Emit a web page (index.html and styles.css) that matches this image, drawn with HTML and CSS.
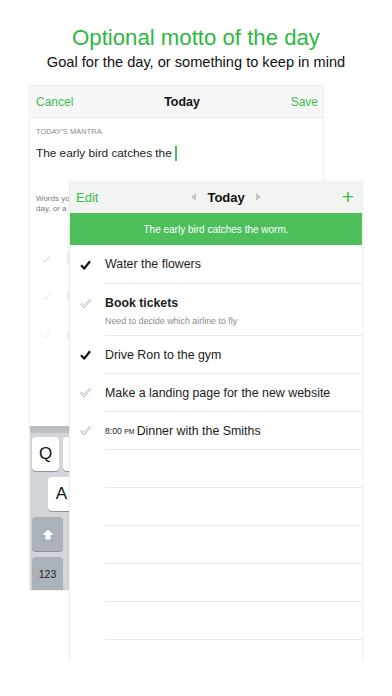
FILE: index.html
```html
<!DOCTYPE html>
<html lang="en">
<head>
    <meta charset="UTF-8">
    <title>Optional motto of the day</title>
    <link rel="stylesheet" href="styles.css">
</head>
<body>
    <div class="intro">
        <h1 class="title">Optional motto of the day</h1>
        <p class="subtitle">Goal for the day, or something to keep in mind</p>
    </div>

    <div class="stage">
        <!-- editor sheet behind -->
        <div class="back">
            <div class="back-bar">
                <span class="link">Cancel</span>
                <span class="bar-title">Today</span>
                <span class="link">Save</span>
            </div>
            <div class="back-body">
                <div class="label">TODAY'S MANTRA</div>
                <div class="input">The early bird catches the<i class="cursor"></i></div>
                <!-- only the strip left of the list sheet shows -->
                <div class="hint">Words yo<br>day, or a</div>
                <ul class="ghost">
                    <li><svg width="9" height="8" viewBox="0 0 11 10"><path d="M1 5.5 L4 8.5 L10 1.5" fill="none" stroke="#e6e6e6" stroke-width="1.8"/></svg><span>D</span></li>
                    <li><svg width="9" height="8" viewBox="0 0 11 10"><path d="M1 5.5 L4 8.5 L10 1.5" fill="none" stroke="#ececec" stroke-width="1.4"/></svg><span>M</span></li>
                    <li><svg width="9" height="8" viewBox="0 0 11 10"><path d="M1 5.5 L4 8.5 L10 1.5" fill="none" stroke="#ececec" stroke-width="1.4"/></svg><span class="small">8</span></li>
                </ul>
            </div>
            <div class="keyboard">
                <div class="kb-row">
                    <span class="key">Q</span><span class="key"></span>
                </div>
                <div class="kb-row indent">
                    <span class="key">A</span>
                </div>
                <div class="kb-row">
                    <span class="key dark">
                        <svg width="12" height="11" viewBox="0 0 12 11"><path d="M6 0.5 L11.5 6 L8.5 6 L8.5 10.5 L3.5 10.5 L3.5 6 L0.5 6 Z" fill="#fff"/></svg>
                    </span>
                </div>
                <div class="kb-row">
                    <span class="key dark num">123</span>
                </div>
            </div>
        </div>

        <!-- list sheet in front -->
        <div class="front">
            <div class="front-bar">
                <span class="link">Edit</span>
                <span class="day-nav">
                    <i class="tri left"></i>
                    <span class="bar-title">Today</span>
                    <i class="tri right"></i>
                </span>
                <span class="plus">+</span>
            </div>
            <div class="mantra">The early bird catches the worm.</div>
            <ul class="tasks">
                <li class="task first">
                    <span class="mark"><svg width="11" height="10" viewBox="0 0 11 10"><path d="M1 5.2 L4.2 8.6 L10 1.2" fill="none" stroke="#111" stroke-width="2.2" stroke-linejoin="round"/></svg></span>
                    <span class="text">Water the flowers</span>
                </li>
                <li class="task tall">
                    <span class="mark"><svg width="11" height="10" viewBox="0 0 11 10"><path d="M0.6 5.4 L1.8 4.3 L4 6.4 L9.6 0.6 L10.5 1.5 L4 9 Z" fill="none" stroke="#9a9a9a" stroke-width="0.7"/></svg></span>
                    <span class="text">
                        <b>Book tickets</b>
                        <small>Need to decide which airline to fly</small>
                    </span>
                </li>
                <li class="task">
                    <span class="mark"><svg width="11" height="10" viewBox="0 0 11 10"><path d="M1 5.2 L4.2 8.6 L10 1.2" fill="none" stroke="#111" stroke-width="2.2" stroke-linejoin="round"/></svg></span>
                    <span class="text">Drive Ron to the gym</span>
                </li>
                <li class="task">
                    <span class="mark"><svg width="11" height="10" viewBox="0 0 11 10"><path d="M0.6 5.4 L1.8 4.3 L4 6.4 L9.6 0.6 L10.5 1.5 L4 9 Z" fill="none" stroke="#9a9a9a" stroke-width="0.7"/></svg></span>
                    <span class="text">Make a landing page for the new website</span>
                </li>
                <li class="task">
                    <span class="mark"><svg width="11" height="10" viewBox="0 0 11 10"><path d="M0.6 5.4 L1.8 4.3 L4 6.4 L9.6 0.6 L10.5 1.5 L4 9 Z" fill="none" stroke="#9a9a9a" stroke-width="0.7"/></svg></span>
                    <span class="text"><em class="time">8:00 <span>PM</span></em>Dinner with the Smiths</span>
                </li>
                <li class="task"><span class="mark"></span><span class="text"></span></li>
                <li class="task"><span class="mark"></span><span class="text"></span></li>
                <li class="task"><span class="mark"></span><span class="text"></span></li>
                <li class="task"><span class="mark"></span><span class="text"></span></li>
                <li class="task"><span class="mark"></span><span class="text"></span></li>
                <li class="task"><span class="mark"></span><span class="text"></span></li>
            </ul>
        </div>
    </div>
</body>
</html>
```

FILE: styles.css
```css
* {
    margin: 0;
    padding: 0;
    box-sizing: border-box;
}
ul, li {
    list-style: none;
}
body {
    width: 392px;
    height: 696px;
    overflow: hidden;
    background: #fff;
    font-family: "Liberation Sans", Arial, sans-serif;
    color: #1c1c1c;
}

.intro {
    padding-top: 25px;
    text-align: center;
}
.title {
    font-size: 22.2px;
    line-height: 26px;
    font-weight: normal;
    color: #2cb842;
}
.subtitle {
    margin-top: 2px;
    font-size: 14.6px;
    line-height: 18px;
    color: #111;
}

.stage {
    position: relative;
    margin-top: 14px;
}

/* back sheet */
.back {
    margin-left: 29px;
    width: 295px;
    height: 506px;
    border: 1px solid #efefef;
    display: flex;
    flex-direction: column;
    background: #fff;
}
.back-bar {
    height: 32px;
    padding: 0 5px 0 6px;
    display: flex;
    align-items: center;
    justify-content: space-between;
    background: #f7f7f7;
    border-bottom: 1px solid #e9e9e9;
}
.link {
    font-size: 12px;
    color: #3dbb4f;
}
.bar-title {
    font-size: 12.4px;
    font-weight: bold;
    color: #111;
}
.back-body {
    padding: 0 6px;
    flex: 1;
}
.label {
    margin-top: 9px;
    font-size: 7.4px;
    line-height: 10px;
    color: #8a8a8a;
    letter-spacing: 0.1px;
}
.input {
    margin-top: 8px;
    font-size: 11.8px;
    line-height: 16px;
    color: #222;
    display: flex;
    align-items: center;
}
.cursor {
    display: inline-block;
    width: 2px;
    height: 15px;
    margin-left: 3px;
    background: #4cc05b;
}
.hint {
    margin-top: 33px;
    width: 33px;
    overflow: hidden;
    font-size: 8px;
    line-height: 10px;
    color: #7a7a7a;
    white-space: nowrap;
}
.ghost {
    margin-top: 26px;
    width: 33px;
    overflow: hidden;
}
.ghost li {
    height: 38px;
    display: flex;
    align-items: center;
    padding-left: 6px;
    gap: 15px;
}
.ghost svg {
    flex: none;
}
.ghost span {
    font-size: 12.5px;
    color: #e9e9e9;
    white-space: nowrap;
}
.ghost .small {
    font-size: 8px;
}

.keyboard {
    height: 164px;
    background: #d2d5da;
    border-top: 7px solid #bcc0c5;
    padding: 4px 0 0 2px;
    display: flex;
    flex-direction: column;
    gap: 6px;
    overflow: hidden;
}
.kb-row {
    display: flex;
    gap: 4px;
}
.kb-row.indent {
    padding-left: 16px;
}
.key {
    flex: none;
    width: 27px;
    height: 34px;
    border-radius: 4px;
    background: #fff;
    box-shadow: 0 1px 0 #8e9297;
    display: flex;
    align-items: center;
    justify-content: center;
    font-size: 17px;
    color: #111;
}
.key.dark {
    width: 31px;
    background: #acb2ba;
}
.key.num {
    font-size: 10.5px;
    color: #222;
}

/* front sheet */
.front {
    position: absolute;
    left: 69px;
    top: 96px;
    width: 294px;
    height: 479px;
    background: #fff;
    border-left: 1px solid #ececec;
    border-right: 1px solid #f0f0f0;
    box-shadow: 0 0 3px rgba(0, 0, 0, 0.05);
    overflow: hidden;
}
.front-bar {
    height: 32px;
    padding: 0 8px 0 6px;
    display: flex;
    align-items: center;
    justify-content: space-between;
    background: #f1f4f1;
}
.front-bar .link {
    font-size: 13px;
}
.front-bar .bar-title {
    font-size: 13px;
}
.day-nav {
    display: flex;
    align-items: center;
    gap: 11px;
    margin-left: 12px;
}
.tri {
    display: inline-block;
    width: 0;
    height: 0;
    border-top: 4px solid transparent;
    border-bottom: 4px solid transparent;
}
.tri.left {
    border-right: 5px solid #c4c4c4;
}
.tri.right {
    border-left: 5px solid #c4c4c4;
}
.plus {
    font-size: 21px;
    font-weight: 300;
    line-height: 20px;
    color: #46bd56;
}
.mantra {
    height: 32px;
    background: #4dc05c;
    color: #fff;
    font-size: 10px;
    display: flex;
    align-items: center;
    justify-content: center;
}

.task {
    display: flex;
    height: 38px;
}
.task.first {
    height: 39px;
}
.task.tall {
    height: 52px;
}
.mark {
    flex: none;
    width: 35px;
    display: flex;
    align-items: center;
    padding-left: 10px;
}
.task.tall .mark {
    align-items: flex-start;
    padding-top: 15px;
}
.text {
    flex: 1;
    border-bottom: 1px solid #e8e8e8;
    display: flex;
    align-items: center;
    font-size: 12.4px;
    color: #1c1c1c;
    white-space: nowrap;
}
.task.tall .text {
    flex-direction: column;
    align-items: flex-start;
    justify-content: flex-start;
    padding-top: 12px;
    gap: 6px;
}
.text b {
    font-size: 12.3px;
    line-height: 14px;
}
.text small {
    font-size: 8.9px;
    line-height: 10px;
    color: #8c8c8c;
}
.time {
    font-style: normal;
    font-size: 8.6px;
    margin-right: 2px;
    margin-top: 1px;
}
.time span {
    font-size: 7px;
}
```
